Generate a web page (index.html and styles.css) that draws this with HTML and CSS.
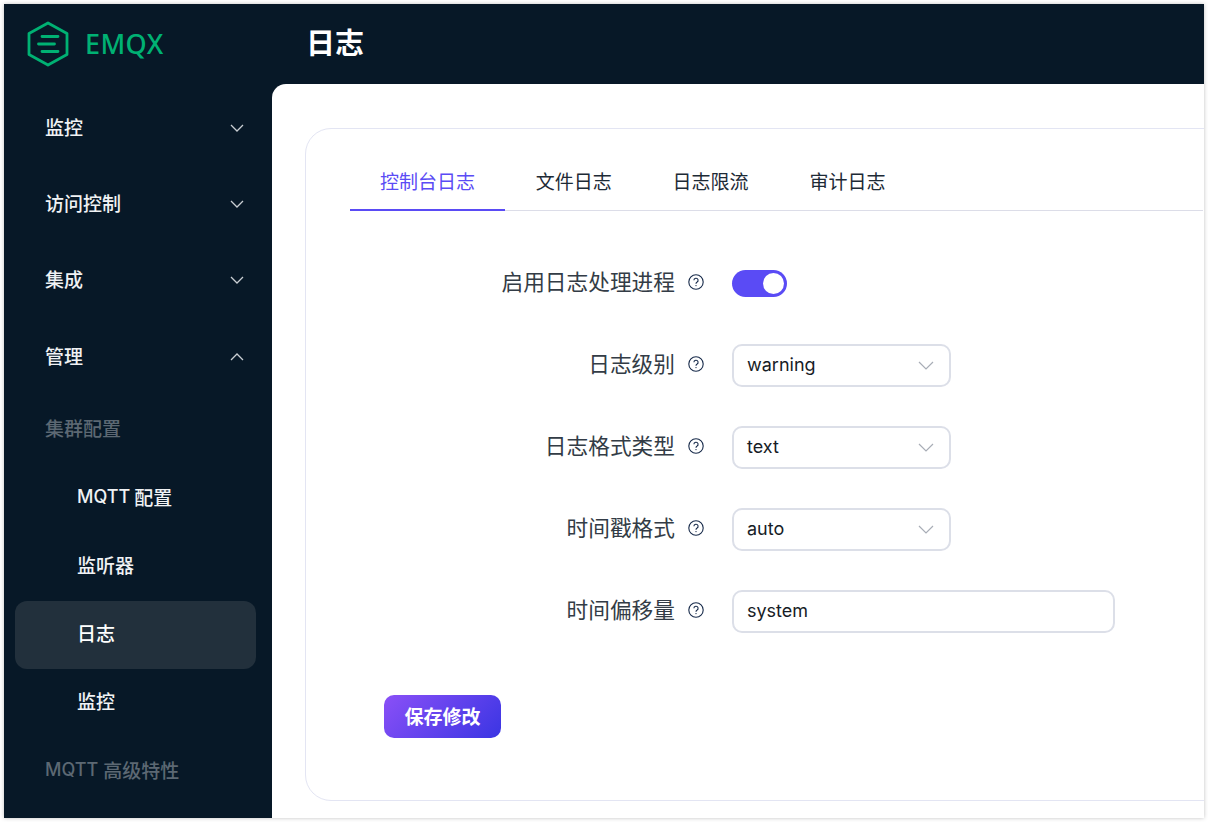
FILE: index.html
```html
<!DOCTYPE html>
<html lang="zh">
<head>
  <meta charset="UTF-8">
  <meta name="viewport" content="width=device-width, initial-scale=1.0">
  <title>日志 - EMQX</title>
  <link rel="stylesheet" href="styles.css">
</head>
<body>
  <div class="app">
    <aside class="sidebar">
      <div class="logo">
        <svg class="logo-mark" viewBox="0 0 42 46" width="42" height="46" fill="none" stroke="#00b173" stroke-linecap="round" stroke-linejoin="round">
          <path d="M21 2 L40 12.5 V33.5 L21 44 L2 33.5 V12.5 Z" stroke-width="2.8"/>
          <path d="M15 15.5 H31 M11.5 23 H27.5 M15 30.5 H31" stroke-width="2.8"/>
        </svg>
        <span class="logo-text">EMQX</span>
      </div>
      <nav class="menu">
        <div class="menu-item">监控
          <svg class="chevron" viewBox="0 0 14 8" width="14" height="8"><path d="M1 1 L7 7 L13 1"/></svg>
        </div>
        <div class="menu-item">访问控制
          <svg class="chevron" viewBox="0 0 14 8" width="14" height="8"><path d="M1 1 L7 7 L13 1"/></svg>
        </div>
        <div class="menu-item">集成
          <svg class="chevron" viewBox="0 0 14 8" width="14" height="8"><path d="M1 1 L7 7 L13 1"/></svg>
        </div>
        <div class="menu-item">管理
          <svg class="chevron" viewBox="0 0 14 8" width="14" height="8"><path d="M1 7 L7 1 L13 7"/></svg>
        </div>
        <div class="menu-group">集群配置</div>
        <div class="menu-sub"><span class="latin">MQTT</span> 配置</div>
        <div class="menu-sub">监听器</div>
        <div class="menu-sub active">日志</div>
        <div class="menu-sub">监控</div>
        <div class="menu-group last">
          <span class="latin">MQTT</span> 高级特性
        </div>
      </nav>
    </aside>
    <div class="right">
      <header class="header"><h1 class="title">日志</h1></header>
      <main class="main">
        <section class="card">
          <div class="tabs">
            <div class="tab active">控制台日志</div>
            <div class="tab">文件日志</div>
            <div class="tab">日志限流</div>
            <div class="tab">审计日志</div>
          </div>
          <form class="form">
            <div class="row">
              <label class="label">启用日志处理进程</label>
              <svg class="help" viewBox="0 0 16 16" width="16" height="16"><circle cx="8" cy="8" r="7.2"/><path d="M5.9 6.3 A2.1 2.1 0 1 1 8.9 8.2 C8.2 8.6 8 8.9 8 9.7"/><circle class="dot" cx="8" cy="11.6" r="0.7"/></svg>
              <div class="switch"><span class="knob"></span></div>
            </div>
            <div class="row">
              <label class="label">日志级别</label>
              <svg class="help" viewBox="0 0 16 16" width="16" height="16"><circle cx="8" cy="8" r="7.2"/><path d="M5.9 6.3 A2.1 2.1 0 1 1 8.9 8.2 C8.2 8.6 8 8.9 8 9.7"/><circle class="dot" cx="8" cy="11.6" r="0.7"/></svg>
              <div class="select"><span class="value">warning</span>
                <svg class="caret" viewBox="0 0 16 9" width="16" height="9"><path d="M1 1 L8 8 L15 1"/></svg>
              </div>
            </div>
            <div class="row">
              <label class="label">日志格式类型</label>
              <svg class="help" viewBox="0 0 16 16" width="16" height="16"><circle cx="8" cy="8" r="7.2"/><path d="M5.9 6.3 A2.1 2.1 0 1 1 8.9 8.2 C8.2 8.6 8 8.9 8 9.7"/><circle class="dot" cx="8" cy="11.6" r="0.7"/></svg>
              <div class="select"><span class="value">text</span>
                <svg class="caret" viewBox="0 0 16 9" width="16" height="9"><path d="M1 1 L8 8 L15 1"/></svg>
              </div>
            </div>
            <div class="row">
              <label class="label">时间戳格式</label>
              <svg class="help" viewBox="0 0 16 16" width="16" height="16"><circle cx="8" cy="8" r="7.2"/><path d="M5.9 6.3 A2.1 2.1 0 1 1 8.9 8.2 C8.2 8.6 8 8.9 8 9.7"/><circle class="dot" cx="8" cy="11.6" r="0.7"/></svg>
              <div class="select"><span class="value">auto</span>
                <svg class="caret" viewBox="0 0 16 9" width="16" height="9"><path d="M1 1 L8 8 L15 1"/></svg>
              </div>
            </div>
            <div class="row">
              <label class="label">时间偏移量</label>
              <svg class="help" viewBox="0 0 16 16" width="16" height="16"><circle cx="8" cy="8" r="7.2"/><path d="M5.9 6.3 A2.1 2.1 0 1 1 8.9 8.2 C8.2 8.6 8 8.9 8 9.7"/><circle class="dot" cx="8" cy="11.6" r="0.7"/></svg>
              <div class="input"><span class="value">system</span></div>
            </div>
            <button class="save" type="button">保存修改</button>
          </form>
        </section>
      </main>
    </div>
  </div>
</body>
</html>
```
FILE: styles.css
```css
* {
  box-sizing: border-box;
}
html, body {
  height: 100%;
}
body {
  margin: 0;
  padding: 4px;
  background-color: #ffffff;
  font-family: Inter, 'Noto Sans CJK SC', sans-serif;
  overflow: hidden;
}
.app {
  display: flex;
  height: 814px;
  background-color: #071827;
  overflow: hidden;
  box-shadow: 0 0 4px rgba(0,0,0,0.25);
}
.sidebar {
  width: 268px;
  flex-shrink: 0;
}
.logo {
  display: flex;
  align-items: center;
  height: 84px;
  padding: 0 0 4px 23px;
  gap: 16px;
}
.logo-text {
  padding-bottom: 1px;
  color: #00b173;
  font-family: 'Noto Sans', sans-serif;
  font-size: 27px;
  font-weight: 500;
  letter-spacing: 0.4px;
}
.menu-item {
  display: flex;
  align-items: center;
  justify-content: space-between;
  height: 76.4px;
  padding: 0 28px 0 41px;
  color: #f0f2f4;
  font-size: 19px;
  font-weight: 500;
}
.chevron {
  margin-top: 3px;
  fill: none;
  stroke: #c9ced3;
  stroke-width: 1.3;
}
.latin {
  font-size: 18px;
}
.menu-group {
  display: flex;
  align-items: center;
  gap: 5px;
  height: 68.2px;
  padding-left: 41px;
  color: #5c6873;
  font-size: 19px;
  font-weight: 500;
}
.menu-group.last {
  padding-top: 2px;
}
.menu-sub {
  display: flex;
  align-items: center;
  gap: 4px;
  height: 68.2px;
  margin: 2.5px 16px -2.5px 11px;
  padding: 0 0 4px 62px;
  border-radius: 12px;
  color: #f0f2f4;
  font-size: 19px;
  font-weight: 500;
}
.menu-sub.active {
  background-color: #22303c;
  color: #ffffff;
}
.right {
  flex: 1;
  min-width: 0;
  display: flex;
  flex-direction: column;
}
.header {
  height: 80px;
  flex-shrink: 0;
  display: flex;
  align-items: center;
  padding: 0 0 7px 34px;
}
.title {
  margin: 0;
  color: #ffffff;
  font-size: 29px;
  font-weight: 600;
}
.main {
  flex: 1;
  background-color: #ffffff;
  border-top-left-radius: 14px;
  padding: 44px 0 17px 33px;
}
.card {
  height: 100%;
  margin-right: -30px;
  border: 1.5px solid #e3e5f3;
  border-radius: 26px;
  padding: 31px 30px 0 44px;
}
.tabs {
  display: flex;
  height: 51px;
  border-bottom: 1.5px solid #dcdde8;
}
.tab {
  height: 51px;
  padding: 0 30.4px;
  line-height: 46px;
  color: #1d2a36;
  font-size: 19px;
}
.tab.active {
  padding: 0 30px;
  margin-right: 0.4px;
  color: #5a4bf5;
  border-bottom: 2px solid #5a4bf5;
}
.form {
  padding-top: 51px;
}
.row {
  display: flex;
  align-items: center;
  height: 82px;
}
.row:first-child {
  height: 42px;
  margin-bottom: 20px;
}
.label {
  width: 325px;
  padding-bottom: 5px;
  text-align: right;
  color: #333c46;
  font-size: 21.7px;
  white-space: nowrap;
}
.help {
  margin: 0 28px 2px 13px;
  fill: none;
  stroke: #172a4a;
  stroke-width: 1.1;
  flex-shrink: 0;
}
.help .dot {
  fill: #172a4a;
  stroke: none;
}
.switch {
  position: relative;
  width: 55px;
  height: 27px;
  border-radius: 14px;
  background-color: #5a4bf5;
}
.knob {
  position: absolute;
  top: 3px;
  right: 3px;
  width: 21px;
  height: 21px;
  border-radius: 50%;
  background-color: #ffffff;
}
.select, .input {
  display: flex;
  align-items: center;
  height: 43px;
  padding: 0 15px 0 13px;
  border: 2px solid #dcdfe8;
  border-radius: 10px;
  color: #171c26;
  font-size: 18px;
}
.value {
  margin-bottom: 2px;
}
.select {
  width: 219px;
  justify-content: space-between;
}
.input {
  width: 383px;
}
.caret {
  fill: none;
  stroke: #a8adb6;
  stroke-width: 1.2;
}
.save {
  display: block;
  width: 117px;
  height: 43px;
  margin: 43px 0 0 34px;
  padding: 0 0 2px;
  border: none;
  border-radius: 10px;
  background: linear-gradient(135deg, #8a50f7, #3a35e3);
  color: #ffffff;
  font-family: inherit;
  font-size: 19px;
  font-weight: 600;
}
```
